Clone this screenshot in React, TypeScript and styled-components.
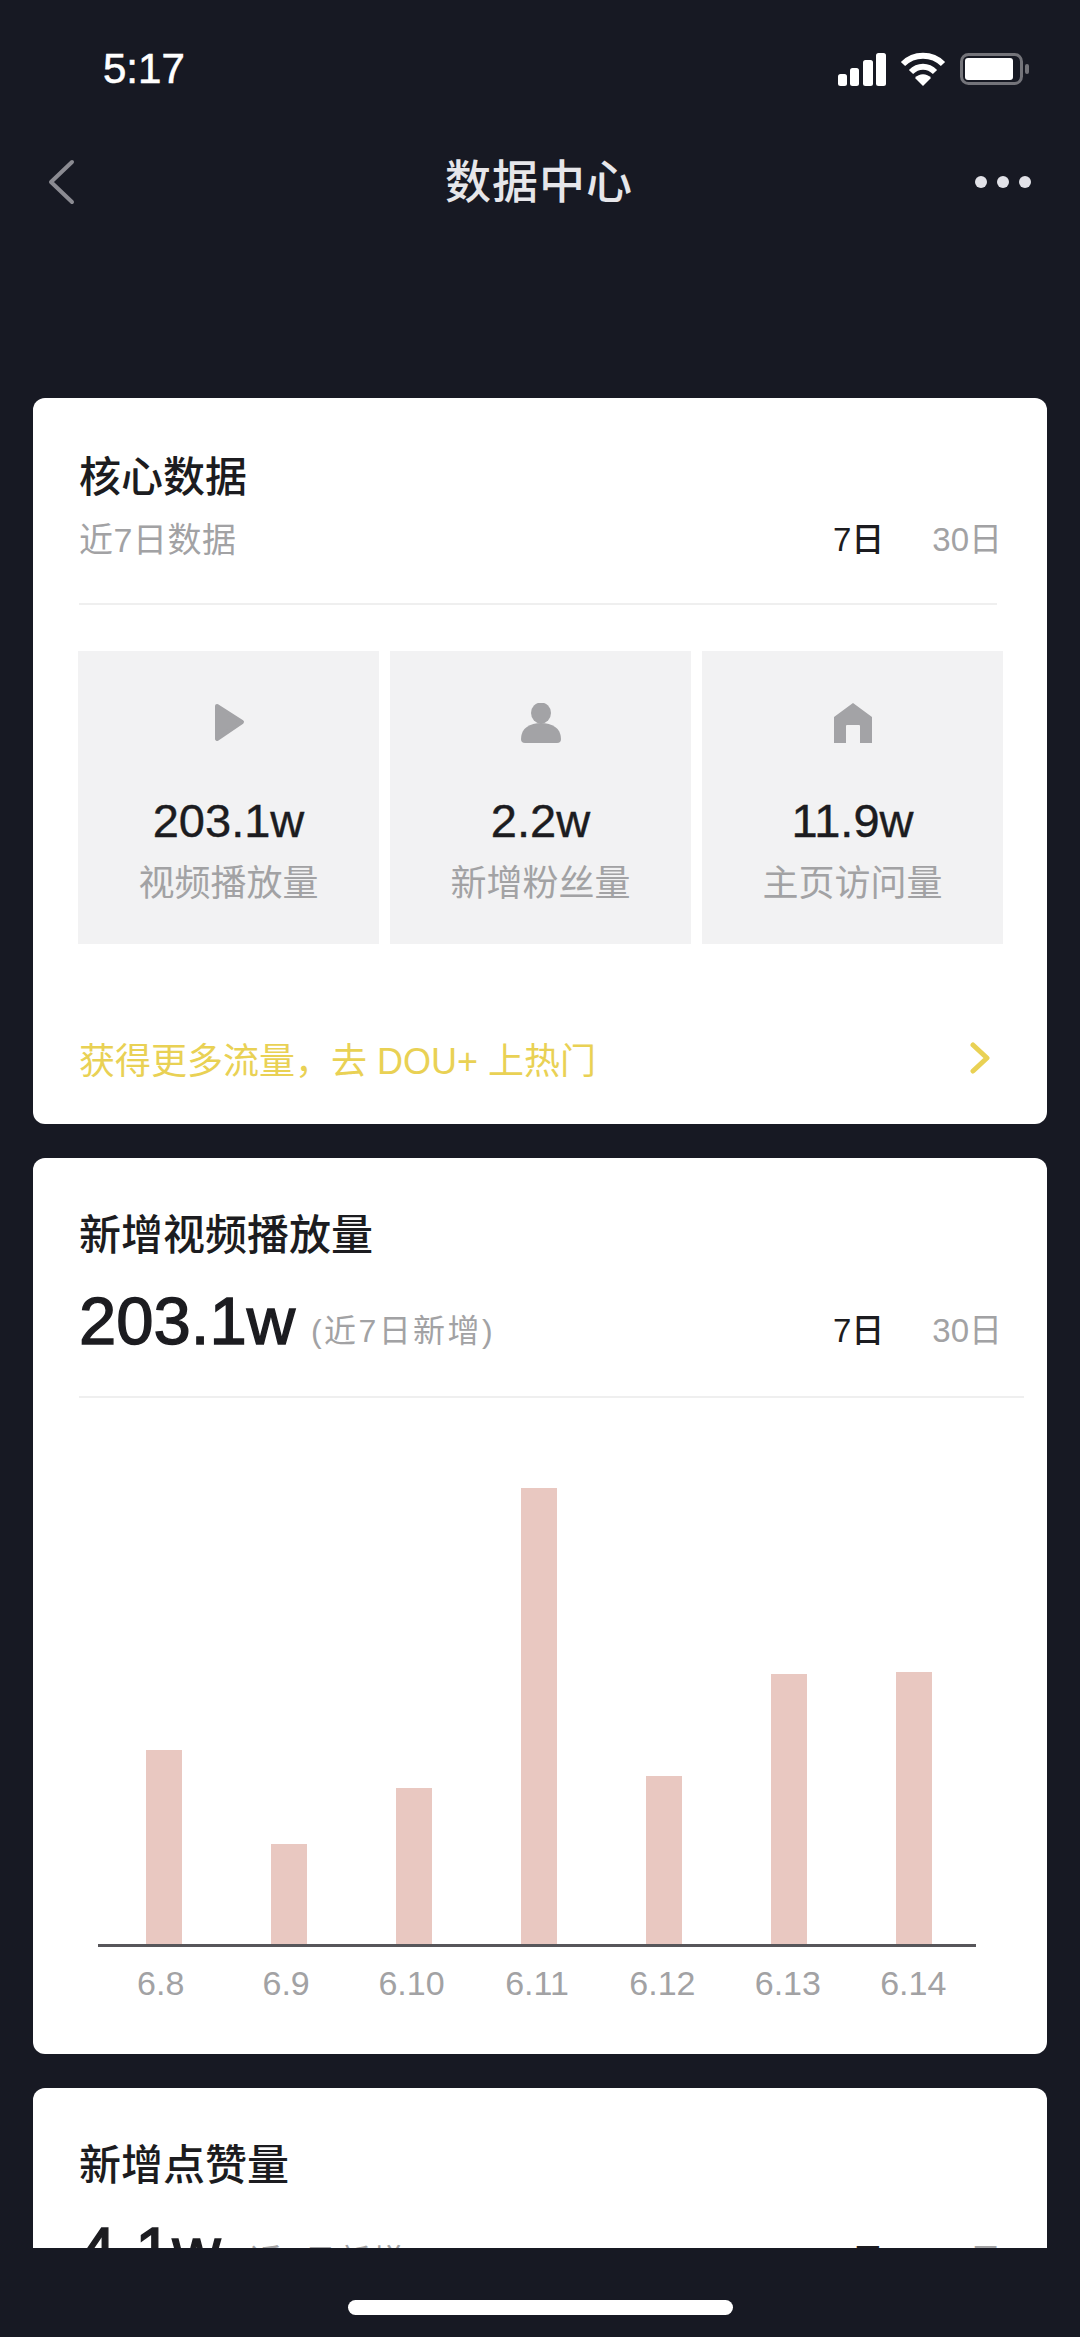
import React from 'react'
import styled, { createGlobalStyle } from 'styled-components'

const FONT = `"Liberation Sans", "Noto Sans CJK SC", sans-serif`
const BG = '#171923'

const dailyPlays = [
    { label: '6.8', height: 194 },
    { label: '6.9', height: 100 },
    { label: '6.10', height: 156 },
    { label: '6.11', height: 456 },
    { label: '6.12', height: 168 },
    { label: '6.13', height: 270 },
    { label: '6.14', height: 272 },
]

const PlayIcon = () => (
    <svg width="40" height="40" viewBox="0 0 40 40">
        <path d="M8 3 L33 19 L8 36 Z" fill="#a3a3a6" stroke="#a3a3a6" strokeWidth="4" strokeLinejoin="round" />
    </svg>
)

const PersonIcon = () => (
    <svg width="40" height="40" viewBox="0 0 40 40">
        <ellipse cx="20" cy="10" rx="10" ry="10.5" fill="#a3a3a6" />
        <path d="M0 36 C0 25 9 20 20 20 C31 20 40 25 40 36 Q40 40 36 40 L4 40 Q0 40 0 36 Z" fill="#a3a3a6" />
    </svg>
)

const HomeIcon = () => (
    <svg width="40" height="40" viewBox="0 0 40 40">
        <path d="M20 0 L39 14 L39 40 L27 40 L27 23 Q27 22 26 22 L14 22 Q13 22 13 23 L13 40 L1 40 L1 14 Z" fill="#a3a3a6" />
    </svg>
)

const SignalIcon = () => (
    <svg width="48" height="33" viewBox="0 0 48 33" fill="#fff">
        <rect x="0" y="21" width="9" height="12" rx="2.5" />
        <rect x="12" y="15" width="9" height="18" rx="2.5" />
        <rect x="25" y="7" width="10" height="26" rx="2.5" />
        <rect x="38" y="0" width="10" height="33" rx="2.5" />
    </svg>
)

const WifiIcon = () => (
    <svg width="46" height="34" viewBox="0 0 46 34" fill="none" stroke="#fff" strokeWidth="6">
        <path d="M3 12 C14 1 32 1 43 12" />
        <path d="M11 20 C18 13 28 13 35 20" />
        <path d="M23 34 L15 26 C19 21 27 21 31 26 Z" fill="#fff" stroke="none" />
    </svg>
)

const BatteryIcon = () => (
    <svg width="70" height="32" viewBox="0 0 70 32">
        <rect x="1.5" y="1.5" width="60" height="29" rx="7" fill="none" stroke="#74747a" strokeWidth="3" />
        <rect x="5" y="5" width="48" height="22" rx="3" fill="#fff" />
        <rect x="65" y="11" width="4" height="10" rx="2" fill="#74747a" />
    </svg>
)

const BackIcon = () => (
    <svg width="30" height="46" viewBox="0 0 30 46" fill="none" stroke="#8b8b92" strokeWidth="4" strokeLinecap="round" strokeLinejoin="round">
        <path d="M25 3 L4 23 L25 43" />
    </svg>
)

const PromoArrow = () => (
    <svg width="20" height="32" viewBox="0 0 20 32" fill="none" stroke="#e9d154" strokeWidth="5" strokeLinecap="round" strokeLinejoin="round">
        <path d="M3 3 L17 16 L3 29" />
    </svg>
)

const RangeTabs = () => (
    <Tabs>
        <Tab $active>7日</Tab>
        <Tab>30日</Tab>
    </Tabs>
)

const MetricCard: React.FC<{ title: string; value: string; height?: number; children?: React.ReactNode }> = ({
    title,
    value,
    height,
    children,
}) => (
    <Card $height={height}>
        <CardTitle>{title}</CardTitle>
        <ValueRow>
            <BigValue>{value}</BigValue>
            <ValueNote>(近7日新增)</ValueNote>
            <RangeTabs />
        </ValueRow>
        <WideDivider />
        {children}
    </Card>
)

export default function App() {
    return (
        <Screen>
            <GlobalStyle />
            <StatusBar>
                <Time>5:17</Time>
                <StatusIcons>
                    <SignalIcon />
                    <WifiIcon />
                    <BatteryIcon />
                </StatusIcons>
            </StatusBar>
            <NavBar>
                <BackButton>
                    <BackIcon />
                </BackButton>
                <NavTitle>数据中心</NavTitle>
                <MoreButton>
                    <Dot />
                    <Dot />
                    <Dot />
                </MoreButton>
            </NavBar>
            <Scroll>
                <Card $height={726}>
                    <CoreTitle>核心数据</CoreTitle>
                    <SubRow>
                        <SubTitle>近7日数据</SubTitle>
                        <RangeTabs />
                    </SubRow>
                    <Divider />
                    <Tiles>
                        <Tile>
                            <PlayIcon />
                            <TileValue>203.1w</TileValue>
                            <TileLabel>视频播放量</TileLabel>
                        </Tile>
                        <Tile>
                            <PersonIcon />
                            <TileValue>2.2w</TileValue>
                            <TileLabel>新增粉丝量</TileLabel>
                        </Tile>
                        <Tile>
                            <HomeIcon />
                            <TileValue>11.9w</TileValue>
                            <TileLabel>主页访问量</TileLabel>
                        </Tile>
                    </Tiles>
                    <Promo>
                        <span>获得更多流量，去 DOU+ 上热门</span>
                        <PromoArrow />
                    </Promo>
                </Card>
                <MetricCard title="新增视频播放量" value="203.1w" height={896}>
                    <Bars>
                        {dailyPlays.map((day) => (
                            <BarSlot key={day.label}>
                                <Bar $height={day.height} />
                            </BarSlot>
                        ))}
                    </Bars>
                    <Labels>
                        {dailyPlays.map((day) => (
                            <BarLabel key={day.label}>{day.label}</BarLabel>
                        ))}
                    </Labels>
                </MetricCard>
                <MetricCard title="新增点赞量" value="4.1w" />
            </Scroll>
            <HomeBar>
                <HomeIndicator />
            </HomeBar>
        </Screen>
    )
}

const GlobalStyle = createGlobalStyle`
    html, body {
        margin: 0;
        padding: 0;
        background: ${BG};
    }
    * {
        box-sizing: border-box;
    }
`
const Screen = styled.div`
    display: flex;
    flex-direction: column;
    width: 1080px;
    height: 2337px;
    overflow: hidden;
    background: ${BG};
    font-family: ${FONT};
`
const StatusBar = styled.div`
    display: flex;
    flex: none;
    align-items: center;
    justify-content: space-between;
    height: 138px;
    padding: 0 50px 0 103px;
`
const Time = styled.div`
    color: #fff;
    font-size: 42px;
    font-weight: 400;
    -webkit-text-stroke: 0.6px #fff;
`
const StatusIcons = styled.div`
    display: flex;
    align-items: center;
    gap: 14px;
`
const NavBar = styled.div`
    display: grid;
    flex: none;
    grid-template-columns: 1fr auto 1fr;
    align-items: center;
    height: 88px;
    padding: 0 49px 0 47px;
`
const BackButton = styled.div`
    display: flex;
`
const NavTitle = styled.div`
    color: #e6e6ea;
    font-size: 46px;
    font-weight: 500;
    letter-spacing: 1px;
    line-height: 60px;
`
const MoreButton = styled.div`
    display: flex;
    justify-content: flex-end;
    gap: 10px;
`
const Dot = styled.span`
    width: 12px;
    height: 12px;
    border-radius: 50%;
    background: #e2e2e8;
`
const Scroll = styled.div`
    display: flex;
    flex: 1;
    flex-direction: column;
    gap: 34px;
    min-height: 0;
    overflow: hidden;
    padding: 172px 33px 0;
`
const Card = styled.section<{ $height?: number }>`
    flex: none;
    height: ${(p) => (p.$height ? `${p.$height}px` : 'auto')};
    padding: 53px 45px 0 46px;
    border-radius: 12px;
    background: #fff;
`
const CardTitle = styled.h2`
    margin: 0;
    color: #1c1c20;
    font-size: 42px;
    font-weight: 500;
    line-height: 50px;
`
const CoreTitle = styled(CardTitle)`
    margin-top: 2px;
`
const SubRow = styled.div`
    display: flex;
    align-items: center;
    justify-content: space-between;
    height: 48px;
    margin-top: 10px;
`
const SubTitle = styled.div`
    color: #a2a2a4;
    font-size: 34px;
    letter-spacing: 0.5px;
`
const Tabs = styled.div`
    display: flex;
    gap: 48px;
    margin-left: auto;
`
const Tab = styled.span<{ $active?: boolean }>`
    color: ${(p) => (p.$active ? '#1c1c20' : '#a2a2a4')};
    font-size: 33px;
    font-weight: ${(p) => (p.$active ? 500 : 400)};
`
const Divider = styled.div`
    height: 2px;
    margin: 42px 5px 0 0;
    background: #efefef;
`
const WideDivider = styled(Divider)`
    margin: 37px -22px 0 0;
`
const Tiles = styled.div`
    display: grid;
    grid-template-columns: repeat(3, 301px);
    gap: 11px;
    margin: 46px 0 0 -1px;
`
const Tile = styled.div`
    display: flex;
    flex-direction: column;
    align-items: center;
    height: 293px;
    padding-top: 52px;
    background: #f2f2f3;
`
const TileValue = styled.div`
    margin-top: 50px;
    color: #1c1c20;
    font-size: 47px;
    line-height: 56px;
    -webkit-text-stroke: 0.4px #1c1c20;
`
const TileLabel = styled.div`
    margin-top: 10px;
    color: #a2a2a4;
    font-size: 36px;
    line-height: 50px;
`
const Promo = styled.div`
    display: flex;
    align-items: center;
    justify-content: space-between;
    height: 50px;
    margin: 89px 12px 0 0;
    color: #e9d154;
    font-size: 36px;
`
const ValueRow = styled.div`
    display: flex;
    align-items: center;
    height: 76px;
    margin-top: 22px;
    ${Tabs} {
        padding-top: 14px;
    }
`
const BigValue = styled.div`
    color: #1c1c20;
    font-size: 67px;
    line-height: 76px;
    -webkit-text-stroke: 1.4px #1c1c20;
`
const ValueNote = styled.div`
    margin-left: 16px;
    padding-top: 14px;
    color: #a2a2a4;
    font-size: 32px;
    letter-spacing: 2.4px;
`
const Bars = styled.div`
    display: flex;
    align-items: flex-end;
    height: 549px;
    margin: 0 26px 0 19px;
    padding-left: 3px;
    border-bottom: 3px solid #57565a;
`
const BarSlot = styled.div`
    display: flex;
    flex: 1;
    justify-content: center;
`
const Bar = styled.div<{ $height: number }>`
    width: 36px;
    height: ${(p) => p.$height}px;
    background: #e9c8c1;
`
const Labels = styled.div`
    display: flex;
    margin: 16px 26px 0 19px;
`
const BarLabel = styled.div`
    flex: 1;
    color: #a2a2a4;
    font-size: 34px;
    line-height: 40px;
    text-align: center;
`
const HomeBar = styled.div`
    display: flex;
    flex: none;
    justify-content: center;
    height: 89px;
    padding-top: 52px;
`
const HomeIndicator = styled.div`
    width: 385px;
    height: 15px;
    border-radius: 8px;
    background: #fff;
`
